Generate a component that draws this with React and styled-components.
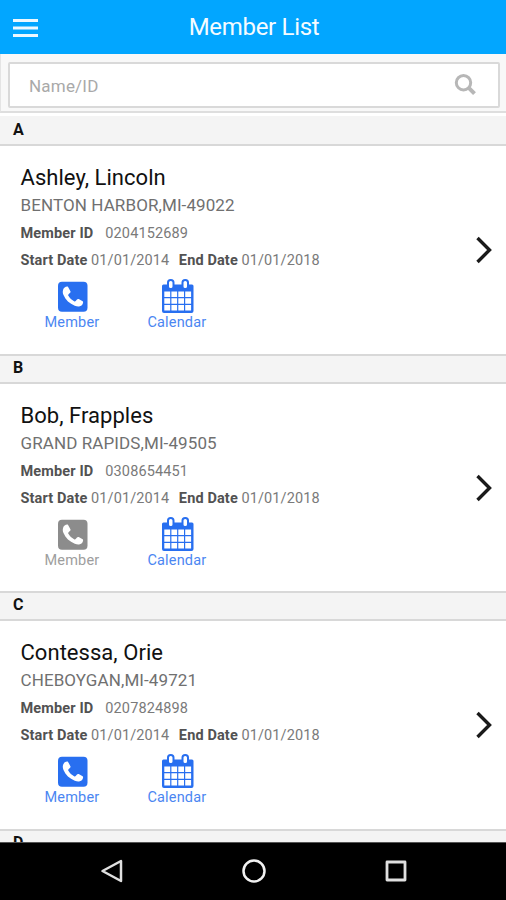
import React from "react";
import styled, { createGlobalStyle } from "styled-components";

const GlobalStyle = createGlobalStyle`
  * { box-sizing: border-box; }
  body { margin: 0; background: #fff; font-family: Roboto, "Liberation Sans", sans-serif; }
`;

const Screen = styled.div`
  width: 506px;
  height: 900px;
  display: flex;
  flex-direction: column;
  overflow: hidden;
`;

const Header = styled.header`
  flex: none;
  height: 54px;
  display: grid;
  grid-template-columns: 50px 1fr 48px;
  align-items: center;
  background: #02a6ff;
`;

const MenuButton = styled.button`
  border: 0;
  background: none;
  padding: 4px 0 0 12.5px;
  height: 26px;
  display: flex;
`;

const Title = styled.h1`
  margin: 0;
  text-align: center;
  color: #f4fbff;
  font-size: 24px;
  line-height: 54px;
  font-weight: 400;
  letter-spacing: -0.3px;
`;

const SearchBar = styled.div`
  flex: none;
  height: 59px;
  padding: 8px 6px 3px 7px;
  background: #f8f8f8;
  border-left: 1px solid #e4e4e4;
  border-bottom: 2px solid #dedede;
`;

const SearchField = styled.label`
  height: 46px;
  display: flex;
  align-items: center;
  justify-content: space-between;
  padding: 0 22px 0 19px;
  background: #fff;
  border: 2px solid #d9d9d9;
  border-radius: 2px;
`;

const SearchInput = styled.input`
  border: 0;
  outline: 0;
  padding: 1px 0 0;
  width: 300px;
  background: none;
  font: 400 17px Roboto, sans-serif;
  letter-spacing: 0.2px;
  &::placeholder { color: #a9a9a9; opacity: 1; }
`;

const List = styled.main`
  flex: 1;
  min-height: 0;
  overflow: hidden;
  padding-top: 3px;
`;

const SectionHeader = styled.h2`
  margin: 0;
  height: 30px;
  padding-left: 13px;
  background: #f4f4f4;
  border-top: 2px solid ${(p) => (p.$first ? "#f4f4f4" : "#d8d8d8")};
  border-bottom: 2px solid #d8d8d8;
  color: #111;
  font-size: 16px;
  line-height: ${(p) => (p.$first ? 24 : 23)}px;
  font-weight: 700;
`;

const Row = styled.article`
  height: 207.5px;
  padding: 18px 13px 0 20.5px;
  display: flex;
  justify-content: space-between;
  background: #fff;
`;

const Name = styled.div`
  color: #111;
  font-size: 22px;
  line-height: 28px;
  letter-spacing: 0.04px;
  white-space: nowrap;
`;

const Place = styled.div`
  color: #707070;
  font-size: 17px;
  line-height: 27px;
  letter-spacing: 0.1px;
  white-space: nowrap;
`;

const Meta = styled.div`
  display: flex;
  gap: ${(p) => p.$gap}px;
  color: #7a7a7a;
  font-size: 14.5px;
  line-height: 27px;
  letter-spacing: 0.12px;
  white-space: nowrap;
`;

const MetaGroup = styled.div`
  padding-top: 1px;
`;

const Strong = styled.b`
  color: #525252;
  font-weight: 700;
  letter-spacing: 0.13px;
`;

const DateValue = styled.span`
  margin-right: 6px;
`;

const Actions = styled.div`
  display: flex;
  gap: 48px;
  padding: 5px 0 0 24px;
`;

const Action = styled.button`
  border: 0;
  padding: 0;
  background: none;
  display: flex;
  flex-direction: column;
  align-items: center;
  color: ${(p) => (p.$muted ? "#8c8c8c" : "#286ff0")};
`;

const ActionLabel = styled.span`
  font: 400 14.5px/17px Roboto, sans-serif;
  letter-spacing: 0.18px;
  opacity: 0.84;
`;

const Chevron = styled.svg`
  margin-top: 72px;
  flex: none;
`;

const NavBar = styled.nav`
  flex: none;
  height: 58px;
  padding: 0 0 2px 2px;
  display: flex;
  justify-content: center;
  align-items: center;
  gap: 118px;
  background: #000;
  border-top: 1px solid #555;
`;

const MenuIcon = () => (
  <svg width="25" height="20" viewBox="0 0 25 20" stroke="#ecf8ff" strokeWidth="3">
    <path d="M0 2.500h25M0 10h25M0 17.500h25" />
  </svg>
);

const SearchIcon = () => (
  <svg width="22" height="22" viewBox="0 0 22 22" fill="none" stroke="#b7b7b7">
    <circle cx="9.500" cy="8.700" r="7.200" strokeWidth="3" />
    <path d="M14.500 13.700l6 6" strokeWidth="4" />
  </svg>
);

const PhoneIcon = () => (
  <svg width="32" height="35" viewBox="-2 -2.700 32 35">
    <rect width="29.500" height="30" rx="4" fill="currentColor" />
    <path
      d="M5.200 7.700c.6-1.600 2-2.700 4-2.900.6 0 .9.5 1.200 1l2 3.700c.4.8 0 1.300-.6 1.800l-1.200 1.200c-.6.5-.5 1-.2 1.600 1.600 2.600 3.100 4 5.700 5.500.7.4 1.100.4 1.600-.2l1.300-1.600c.5-.6 1-.8 1.700-.4l3.500 1.900c.7.4 1 .7.9 1.400-.2 2-1.400 3.300-3.300 3.900-1.500.5-3 .2-5-.6-5.300-2.200-9.200-5.700-11.300-10.700-.8-2-1-3.700-.3-5.600z"
      fill="#fff"
    />
  </svg>
);

const CalendarIcon = () => (
  <svg width="34" height="35" viewBox="-1 0 34 35" fill="none">
    <path d="M2 5.500h29q1.500 0 1.500 1.500v25q0 2-2 2H3q-2 0-2-2V7q0-1.500 1.500-1.500z" fill="currentColor" />
    <g fill="#fff">
      <path d="M3.300 12.500h5.900v5.400H3.300zM10.400 12.500h5.700v5.400h-5.700zM17.300 12.500h5.700v5.400h-5.700zM24.200 12.500h5.900v5.400h-5.900z" />
      <path d="M3.300 19.300h5.900v5.400H3.300zM10.400 19.300h5.700v5.400h-5.700zM17.300 19.300h5.700v5.400h-5.700zM24.200 19.300h5.900v5.400h-5.900z" />
      <path d="M3.300 26.100h5.900v5.400H3.300zM10.400 26.100h5.700v5.400h-5.700zM17.300 26.100h5.700v5.400h-5.700zM24.200 26.100h5.900v5.400h-5.900z" />
    </g>
    <g fill="#fff" stroke="currentColor" strokeWidth="2">
      <rect x="7" y="1" width="5.500" height="9" rx="2.600" />
      <rect x="21.500" y="1" width="5.500" height="9" rx="2.600" />
    </g>
  </svg>
);

const members = [
  { letter: "A", name: "Ashley, Lincoln", place: "BENTON HARBOR,MI-49022", id: "0204152689" },
  { letter: "B", name: "Bob, Frapples", place: "GRAND RAPIDS,MI-49505", id: "0308654451", muted: true },
  { letter: "C", name: "Contessa, Orie", place: "CHEBOYGAN,MI-49721", id: "0207824898" },
];

function MemberRow({ member }) {
  return (
    <Row>
      <div>
        <Name>{member.name}</Name>
        <Place>{member.place}</Place>
        <MetaGroup>
          <Meta $gap={12}>
            <Strong>Member ID</Strong>
            <span>{member.id}</span>
          </Meta>
          <Meta $gap={3.5}>
            <Strong>Start Date</Strong>
            <DateValue>01/01/2014</DateValue>
            <Strong>End Date</Strong>
            <span>01/01/2018</span>
          </Meta>
        </MetaGroup>
        <Actions>
          <Action $muted={member.muted}>
            <PhoneIcon />
            <ActionLabel>Member</ActionLabel>
          </Action>
          <Action>
            <CalendarIcon />
            <ActionLabel>Calendar</ActionLabel>
          </Action>
        </Actions>
      </div>
      <Chevron width="18" height="28" viewBox="0 0 18 28" fill="none" stroke="#1a1a1a" strokeWidth="3.400">
        <path d="M2.500 2l12 12L2.500 26" />
      </Chevron>
    </Row>
  );
}

export default function App() {
  return (
    <Screen>
      <GlobalStyle />
      <Header>
        <MenuButton aria-label="Menu"><MenuIcon /></MenuButton>
        <Title>Member List</Title>
      </Header>
      <SearchBar>
        <SearchField>
          <SearchInput placeholder="Name/ID" />
          <SearchIcon />
        </SearchField>
      </SearchBar>
      <List>
        {members.map((m, i) => (
          <React.Fragment key={m.letter}>
            <SectionHeader $first={i === 0}>{m.letter}</SectionHeader>
            <MemberRow member={m} />
          </React.Fragment>
        ))}
        <SectionHeader>D</SectionHeader>
      </List>
      <NavBar>
        <svg width="24" height="24" viewBox="0 0 24 24" fill="none" stroke="#e0e0e0" strokeWidth="2.500" strokeLinejoin="round">
          <path d="M21 2v20L2.500 12z" />
        </svg>
        <svg width="24" height="24" viewBox="0 0 24 24" fill="none" stroke="#f2f2f2" strokeWidth="2.500">
          <circle cx="12" cy="12" r="10.500" />
        </svg>
        <svg width="24" height="24" viewBox="0 0 24 24" fill="none" stroke="#e0e0e0" strokeWidth="2.800" strokeLinejoin="round">
          <path d="M3 3h18v18H3z" />
        </svg>
      </NavBar>
    </Screen>
  );
}
